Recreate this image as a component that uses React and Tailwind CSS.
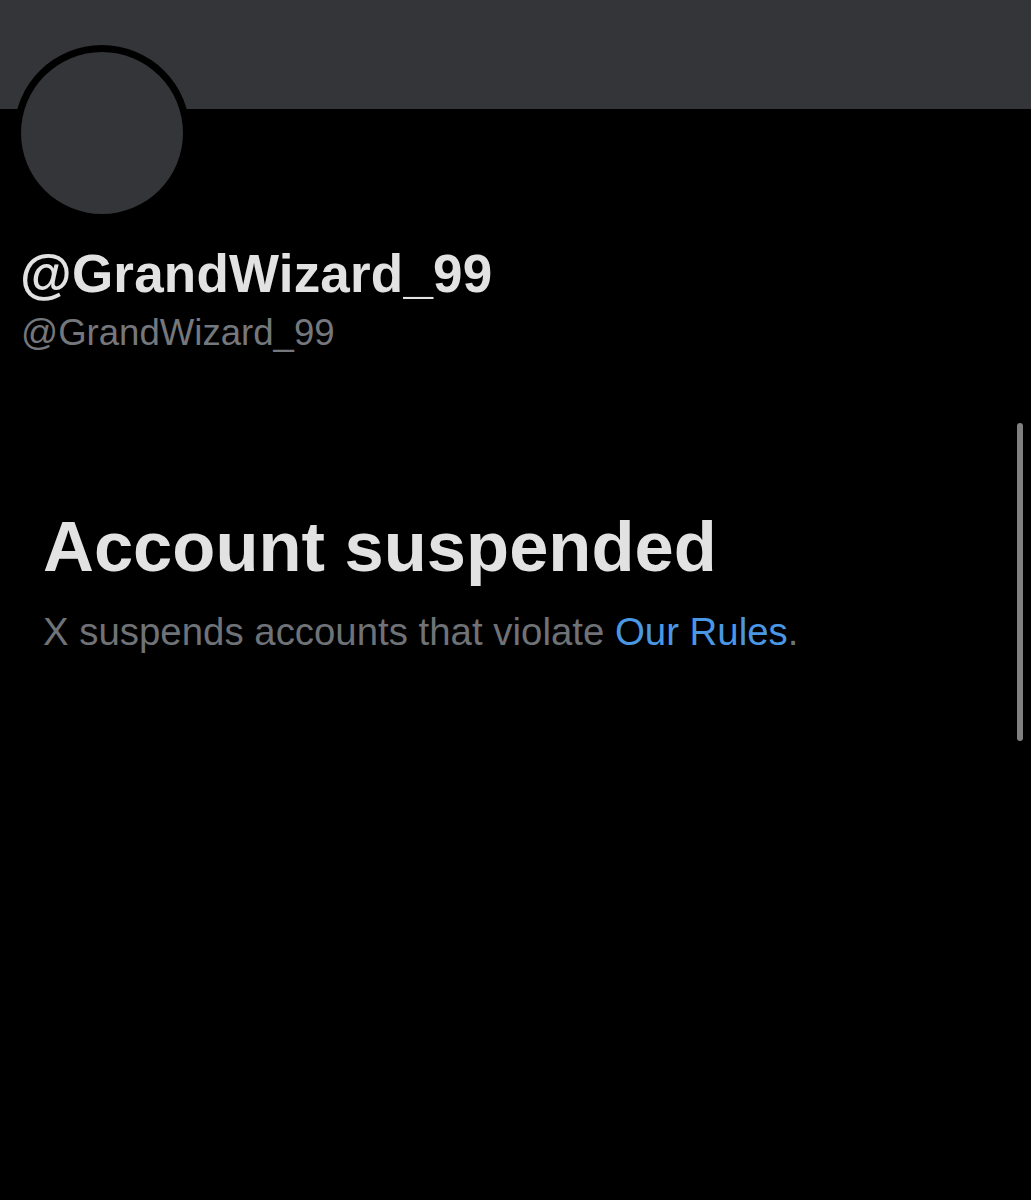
export default function App() {
  return (
    <div className="relative w-[1031px] h-[1200px] bg-black overflow-hidden" style={{ fontFamily: '"Liberation Sans", Arial, sans-serif' }}>
      <div className="h-[109px] bg-[#343539]" />
      <div className="ml-[14px] -mt-[64px] w-[176px] h-[176px] rounded-full bg-black flex items-center justify-center">
        <div className="w-[162px] h-[162px] rounded-full bg-[#343539]" />
      </div>
      <div className="pl-[20px] mt-[26px] text-[53px] leading-none font-bold text-[#e2e2e2] tracking-[0.2px]">@GrandWizard_99</div>
      <div className="pl-[21px] mt-[15px] text-[36.6px] leading-none text-[#74777c]">@GrandWizard_99</div>
      <div className="pl-[43px] mt-[160px] text-[70.5px] leading-none font-bold text-[#e2e2e2]">Account suspended</div>
      <div className="pl-[43px] mt-[31px] text-[38.4px] leading-none text-[#6f7276]">
        X suspends accounts that violate <span className="text-[#4a97e4]">Our Rules</span>.
      </div>
      <div className="absolute right-[8px] top-[423px] w-[6px] h-[318px] rounded-full bg-[#808080]" />
    </div>
  );
}
